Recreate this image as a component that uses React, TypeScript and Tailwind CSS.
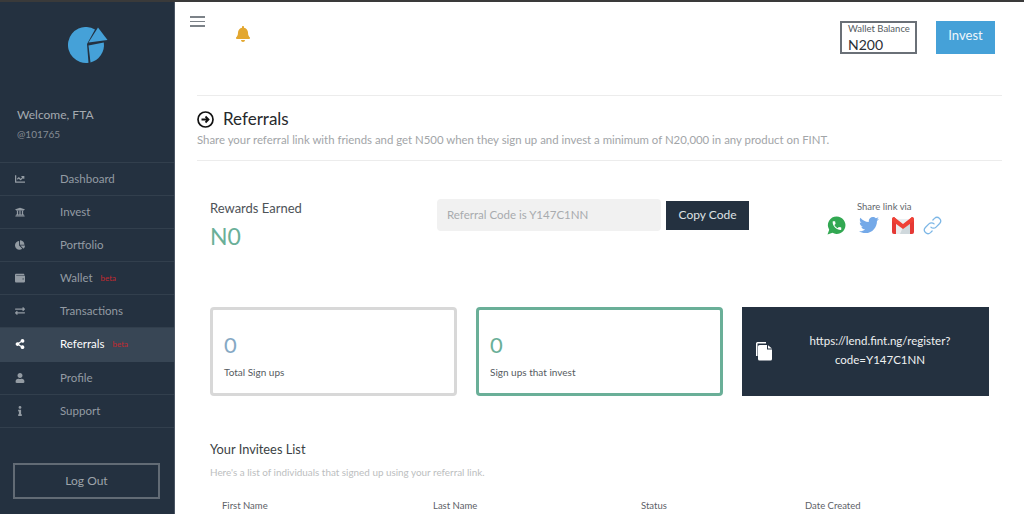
import type { ReactNode } from "react";
import {
  FaBell,
  FaChartLine,
  FaChartPie,
  FaExchangeAlt,
  FaInfo,
  FaShareAlt,
  FaTwitter,
  FaUniversity,
  FaUser,
  FaWallet,
} from "react-icons/fa";

type NavItem = {
  label: string;
  icon: ReactNode;
  beta?: boolean;
  active?: boolean;
};

const NAV_ITEMS: NavItem[] = [
  { label: "Dashboard", icon: <FaChartLine /> },
  { label: "Invest", icon: <FaUniversity /> },
  { label: "Portfolio", icon: <FaChartPie /> },
  { label: "Wallet", icon: <FaWallet />, beta: true },
  { label: "Transactions", icon: <FaExchangeAlt /> },
  { label: "Referrals", icon: <FaShareAlt />, beta: true, active: true },
  { label: "Profile", icon: <FaUser /> },
  { label: "Support", icon: <FaInfo /> },
];

function Logo() {
  return (
    <svg width="40" height="37" viewBox="0 0 40 37" fill="#45a1d8">
      <path d="M27 2.400 L19 17 L20.500 35.800 A18 18 0 1 1 27 2.400 Z" />
      <path d="M20.500 18.500 L35.800 15.500 A18 18 0 0 1 22.500 35.400 Z" />
      <path d="M20.500 15.500 L30 0.500 L39.500 13 Z" />
    </svg>
  );
}

function Sidebar() {
  return (
    <aside className="flex w-[175px] shrink-0 flex-col border-r border-[#4a5563] bg-[#243140]">
      <div className="flex h-[160px] flex-col">
        <div className="ml-[68px] mt-[25px] h-[37px]">
          <Logo />
        </div>
        <p className="ml-[17px] mt-[43px] text-[12px] leading-4 text-[#a5aab0]">Welcome, FTA</p>
        <p className="ml-[17px] mt-[3px] text-[10px] leading-4 text-[#868d95]">@101765</p>
      </div>
      <nav className="flex flex-col border-t border-[#323f4d]">
        {NAV_ITEMS.map((item) => (
          <div
            key={item.label}
            className={
              item.active
                ? "flex h-[34px] items-center bg-[#384655] pb-[2px] text-white"
                : "flex h-[33px] items-center border-b border-[#323f4d] text-[#939ba3]"
            }
          >
            <span className="flex w-[60px] justify-start pl-[15px] text-[10px]">{item.icon}</span>
            <span className="text-[11.5px]">{item.label}</span>
            {item.beta && <span className="ml-[8px] text-[8px] text-[#c22a30]">beta</span>}
          </div>
        ))}
      </nav>
      <button className="ml-[13px] mt-[35px] h-[36px] w-[147px] border-2 border-[#626b75] text-[12px] text-[#9ea4aa]">
        Log Out
      </button>
    </aside>
  );
}

function Hamburger() {
  return (
    <div className="flex w-[15px] flex-col gap-[3px]">
      <span className="h-[1.5px] bg-[#7c8288]" />
      <span className="h-[1.5px] bg-[#7c8288]" />
      <span className="h-[1.5px] bg-[#7c8288]" />
    </div>
  );
}

function WhatsappIcon() {
  return (
    <svg width="19" height="19" viewBox="0 0 19 19">
      <path d="M9.800 0.500a8.700 8.700 0 1 1-4.300 16.300L0.500 18.500l1.700-4.800A8.700 8.700 0 0 1 9.800 0.500z" fill="#32a852" />
      <path
        transform="translate(4.200 3.900) scale(0.48)"
        d="M6.620 10.790c1.440 2.830 3.760 5.140 6.590 6.590l2.200-2.200c.27-.27.67-.36 1.020-.24 1.120.37 2.330.57 3.570.57.55 0 1 .45 1 1V20c0 .55-.45 1-1 1-9.390 0-17-7.610-17-17 0-.55.45-1 1-1h3.500c.55 0 1 .45 1 1 0 1.250.2 2.450.57 3.570.11.35.03.74-.25 1.020l-2.200 2.200z"
        fill="white"
      />
    </svg>
  );
}

function GmailIcon() {
  return (
    <svg width="22" height="17" viewBox="0 0 22 17">
      <path d="M0 2h22v13a2 2 0 0 1-2 2H2a2 2 0 0 1-2-2z" fill="#eceff1" />
      <path d="M11 10 18 4v13H8z" fill="#cfd8dc" />
      <path d="M0 2a2 2 0 0 1 2-2l2 2v15H2a2 2 0 0 1-2-2z" fill="#e53935" />
      <path d="M22 2a2 2 0 0 0-2-2l-2 2v15h2a2 2 0 0 0 2-2z" fill="#e53935" />
      <path d="M2 0 11 7 20 0l2 2v2L11 12 0 4V2z" fill="#ef4136" />
    </svg>
  );
}

function LinkIcon() {
  return (
    <svg
      width="19"
      height="19"
      viewBox="0 0 24 24"
      fill="none"
      stroke="#7db7e6"
      strokeWidth="1.6"
      strokeLinecap="round"
      strokeLinejoin="round"
    >
      <path d="M10 14a4.500 4.500 0 0 0 6.500 0l4.500-4.500a4.600 4.600 0 0 0-6.500-6.500l-2 2" />
      <path d="M14 10a4.500 4.500 0 0 0-6.500 0L3 14.500a4.600 4.600 0 0 0 6.500 6.500l2-2" />
    </svg>
  );
}

function CopyIcon() {
  return (
    <svg width="17" height="19" viewBox="0 0 17 19" fill="white">
      <path d="M0 1.500A1.500 1.500 0 0 1 1.500 0H10v1.500H1.500V14H0z" />
      <path d="M3.500 3H11v4.500h5V17a1.500 1.500 0 0 1-1.500 1.500h-11A1.500 1.500 0 0 1 2 17V4.500A1.500 1.500 0 0 1 3.500 3z" />
      <path d="M12 3.200 16 6.500h-4z" />
    </svg>
  );
}

function StatCard({ value, label, accent }: { value: string; label: string; accent: boolean }) {
  return (
    <div
      className={
        accent
          ? "flex h-[89px] flex-col rounded border-[3px] border-[#6aaf98] pl-[11px]"
          : "flex h-[89px] flex-col rounded border-[3px] border-[#d8d8d8] pl-[11px]"
      }
    >
      <p className={accent ? "mt-[21px] text-[22px] leading-7 text-[#6aaf98]" : "mt-[21px] text-[22px] leading-7 text-[#86a9c4]"}>
        {value}
      </p>
      <p className="mt-[5px] text-[10px] leading-4 text-[#555b61]">{label}</p>
    </div>
  );
}

export default function App() {
  return (
    <div className="flex h-screen flex-col overflow-hidden bg-white font-['Lato','Noto_Sans',sans-serif]">
      <div className="h-[2px] shrink-0 bg-[#3a3a3a]" />
      <div className="flex min-h-0 flex-1">
        <Sidebar />
        <main className="min-w-0 flex-1">
          <header className="relative h-[93px]">
            <div className="ml-[15px] pt-[14px]">
              <Hamburger />
            </div>
            <FaBell className="absolute left-[60px] top-[24px] text-[16px] text-[#e3a72f]" />
            <div className="absolute right-[107px] top-[19px] h-[33px] w-[77px] border-2 border-[#6a7077] pl-[6px] pt-[2px] text-[#2a2f35]">
              <p className="text-[9.500px] leading-[8px] text-[#555b61]">Wallet Balance</p>
              <p className="mt-[3px] text-[14px] leading-[17px]">N200</p>
            </div>
            <button className="absolute right-[29px] top-[19px] h-[33px] w-[59px] bg-[#45a1d8] pb-[4px] text-[13px] text-[#eef6fb]">
              Invest
            </button>
          </header>

          <div className="ml-[22px] mr-[22px]">
            <section className="h-[66px] border-y border-[#ececec]">
              <div className="mt-[12px] flex items-center gap-[9px]">
                <svg width="17" height="17" viewBox="0 0 17 17" fill="none" stroke="#111" strokeWidth="1.7">
                  <circle cx="8.500" cy="8.500" r="7.500" />
                  <path d="M4.500 8.500h7M8.500 5.500l3 3-3 3" strokeWidth="1.8" />
                </svg>
                <h1 className="text-[17px] leading-[22px] text-[#27292c]">Referrals</h1>
              </div>
              <p className="mt-[2px] text-[11.400px] leading-4 text-[#a2a5a8]">
                Share your referral link with friends and get N500 when they sign up and invest a minimum of N20,000 in any product on FINT.
              </p>
            </section>

            <section className="ml-[13px] mt-[38px] flex h-[62px] w-[792px]">
              <div className="w-[227px]">
                <p className="text-[13px] leading-[18px] text-[#4d5257]">Rewards Earned</p>
                <p className="mt-[4px] text-[23px] leading-[30px] text-[#6aaf98]">N0</p>
              </div>
              <div className="flex h-[32px] w-[224px] items-center rounded-sm bg-[#f1f1f1] pl-[10px] text-[11.5px] text-[#a8abae]">
                Referral Code is Y147C1NN
              </div>
              <button className="ml-[5px] mt-[2px] h-[29px] w-[83px] bg-[#243140] pb-[2px] text-[12px] text-[#dfe2e5]">
                Copy Code
              </button>
              <div className="ml-[67px] flex flex-col items-start">
                <p className="ml-[41px] mt-[1px] text-[9.500px] leading-[14px] text-[#63676c]">Share link via</p>
                <div className="mt-[1px] flex items-center">
                  <span className="ml-[11px]"><WhatsappIcon /></span>
                  <FaTwitter className="ml-[13px] text-[20px] text-[#74a9e8]" />
                  <span className="ml-[13px]"><GmailIcon /></span>
                  <span className="ml-[9px]"><LinkIcon /></span>
                </div>
              </div>
            </section>

            <section className="ml-[13px] mt-[46px] grid w-[779px] grid-cols-3 gap-[19px]">
              <StatCard value="0" label="Total Sign ups" accent={false} />
              <StatCard value="0" label="Sign ups that invest" accent />
              <div className="flex h-[89px] items-center bg-[#243140] pl-[14px] text-white">
                <CopyIcon />
                <p className="ml-[22px] w-[170px] pb-[4px] text-center text-[11.5px] leading-[19px] text-[#f0f1f2]">
                  https://lend.fint.ng/register?
                  <br />
                  code=Y147C1NN
                </p>
              </div>
            </section>

            <section className="ml-[13px] mt-[44px]">
              <h2 className="text-[12.8px] leading-[18px] text-[#3b3f44]">Your Invitees List</h2>
              <p className="mt-[7px] text-[9.900px] leading-[14px] text-[#bcbec0]">
                Here's a list of individuals that signed up using your referral link.
              </p>
              <div className="mt-[20px] grid grid-cols-[211px_208px_164px_1fr] pl-[12px] text-[9.500px] leading-[14px] text-[#5d6167]">
                <span>First Name</span>
                <span>Last Name</span>
                <span>Status</span>
                <span>Date Created</span>
              </div>
            </section>
          </div>
        </main>
      </div>
    </div>
  );
}
